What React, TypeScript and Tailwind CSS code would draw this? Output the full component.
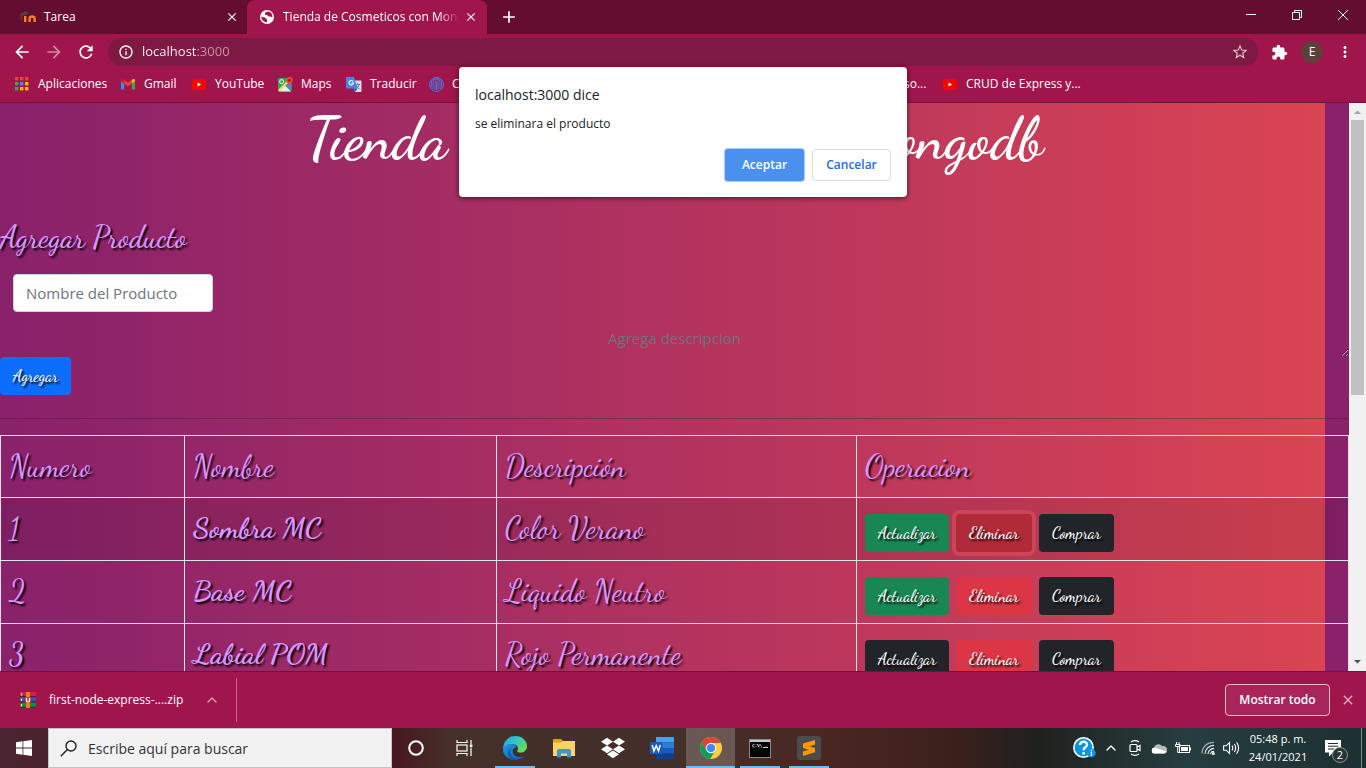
import React from "react";
import {
  MdArrowBack,
  MdArrowForward,
  MdRefresh,
  MdInfoOutline,
  MdStarBorder,
  MdExtension,
  MdMoreVert,
  MdClose,
  MdAdd,
} from "react-icons/md";
import { FaDropbox } from "react-icons/fa";
import { ChevronUp } from "lucide-react";

function MoodleIcon() {
  return (
    <svg width="16" height="16" viewBox="0 0 16 16" aria-hidden="true">
      <path d="M5.2 13V7M9.6 13V9.4C9.6 6.8 14.6 6.8 14.6 9.4V13" fill="none" stroke="#f58220" strokeWidth="2.4" />
      <path d="M0 5 4.5 2.6 9 3 7.4 5.6 3 6.8Z" fill="#4a4340" />
      <path d="M1.2 5.5V10.5" stroke="#6d4a3e" strokeWidth="1" />
    </svg>
  );
}

function GlobeIcon() {
  return (
    <svg width="14" height="14" viewBox="0 0 14 14" aria-hidden="true">
      <circle cx="7" cy="7" r="7" fill="#fff" />
      <path d="M1.4 6.6C3 7.6 5 7 5.6 8.2 6.4 9.6 7.4 9 7.2 10.4 7 11.4 6.8 12 7 12.4 3.8 12.4 1.2 10 1.4 6.6ZM7.6 1.6C6 2 4.6 3 5 4.4 5.6 5.6 7.2 4.6 8 5.8 8.8 7 10.4 6.4 12.4 7.4 12.8 4.4 10.8 1.6 7.6 1.6Z" fill="#a1154d" />
    </svg>
  );
}

function AppsIcon() {
  const colors = ["#ea4335", "#ea4335", "#ea4335", "#34a853", "#4285f4", "#fbbc05", "#34a853", "#fbbc05", "#fbbc05"];
  return (
    <svg width="14" height="14" viewBox="0 0 14 14" aria-hidden="true">
      {colors.map((c, i) => (
        <rect key={i} x={(i % 3) * 5} y={Math.floor(i / 3) * 5} width="3.4" height="3.4" fill={c} />
      ))}
    </svg>
  );
}

function GmailIcon() {
  return (
    <svg width="14" height="14" viewBox="0 0 14 14" aria-hidden="true">
      <path d="M0 4 3.2 6.4V12.5H1C.4 12.5 0 12 0 11.5Z" fill="#4285f4" />
      <path d="M14 4 10.8 6.4V12.5H13C13.6 12.5 14 12 14 11.5Z" fill="#34a853" />
      <path d="M3.2 2.8 7 5.7 10.8 2.8V6.6L7 9.5 3.2 6.6Z" fill="#ea4335" />
      <path d="M0 3.4C0 1.8 1.6 1.4 3.2 2.8V6.6L0 4.2Z" fill="#c5221f" />
      <path d="M14 3.4C14 1.8 12.4 1.4 10.8 2.8V6.6L14 4.2Z" fill="#fbbc04" />
    </svg>
  );
}

function YouTubeIcon() {
  return (
    <svg width="14" height="14" viewBox="0 0 14 14" aria-hidden="true">
      <rect x="0" y="2" width="14" height="11" rx="2.6" fill="#f00" />
      <path d="M5.5 5.4 9.3 7.5 5.5 9.6Z" fill="#fff" />
    </svg>
  );
}

function MapsIcon() {
  return (
    <svg width="15" height="15" viewBox="0 0 15 15" aria-hidden="true">
      <rect x="0" y="1" width="13.5" height="13.5" rx="1" fill="#34a853" />
      <path d="M1 14.5 7 8.5 13 14.5Z" fill="#e8eaed" />
      <path d="M8 7.5 11 5 13.5 8V13.5Z" fill="#4285f4" />
      <path d="M0 13 12 1 14 2 1.5 14.5Z" fill="#fdd663" />
      <circle cx="3.6" cy="4.6" r="2" fill="none" stroke="#fff" strokeWidth="1" />
      <path d="M11.5 0A3.3 3.3 0 0 1 14.8 3.3C14.8 5.3 12 6.4 11.5 9.5 11 6.4 8.2 5.3 8.2 3.3A3.3 3.3 0 0 1 11.5 0Z" fill="#ea4335" />
      <circle cx="11.5" cy="3.3" r="1.2" fill="#8c1a11" />
    </svg>
  );
}

function TranslateIcon() {
  return (
    <svg width="16" height="15" viewBox="0 0 16 15" aria-hidden="true">
      <path d="M6 3.5H14.5C15 3.5 15.5 4 15.5 4.5V14C15.5 14.5 15 15 14.5 15H9Z" fill="#dadce0" />
      <path d="M9 7.4H14M11.5 6.4V7.4M13 7.6C12.5 9.6 11 11 9.6 11.8M10 8.2C10.6 9.8 12 11 13.6 11.8" fill="none" stroke="#607d8b" strokeWidth="1" />
      <path d="M1 0H8L11.5 11.6H1C.4 11.6 0 11.2 0 10.6V1C0 .4.4 0 1 0Z" fill="#4285f4" />
      <path d="M7.2 4.5A2.2 2.2 0 1 0 7.5 6H5.4" fill="none" stroke="#fff" strokeWidth="1.1" />
      <path d="M8 11.6H11.5L9 15Z" fill="#1a57c4" />
    </svg>
  );
}

function RingIcon() {
  return (
    <svg width="15" height="15" viewBox="0 0 15 15" aria-hidden="true" fill="none" stroke="#4479e8" strokeWidth="1">
      <circle cx="7.5" cy="7.5" r="6.9" />
      <path d="M4 12V5.5A3.5 3.5 0 0 1 11 5.5V12M6 12.5V5.5A1.5 1.5 0 0 1 9 5.5V12.5M7.5 5V13M2.3 10.5V6A5.2 5.2 0 0 1 12.7 6V10.5" />
    </svg>
  );
}

function RarIcon() {
  return (
    <svg width="16" height="16" viewBox="0 0 16 16" aria-hidden="true">
      <rect x="0" y="0" width="16" height="5" fill="#d81b4c" />
      <rect x="0" y="5.4" width="16" height="5" fill="#3f51b5" />
      <rect x="0" y="10.8" width="16" height="5" fill="#158a3c" />
      <path d="M0 4.5H16M0 9.9H16M0 15.4H16" stroke="#38203a" strokeWidth=".9" />
      <path d="M1.5 1V3.5M1.5 6.5V9M1.5 12V14.5" stroke="#ffe57a" strokeWidth="1.2" />
      <rect x="6" y="0" width="4" height="16" fill="#ef7d1a" />
      <rect x="5" y="5" width="6" height="6" fill="#c8441c" />
      <path d="M6.5 6V8.4A1.5 1.5 0 0 0 9.5 8.4V6" fill="none" stroke="#fff" strokeWidth="1.2" />
    </svg>
  );
}

function WindowsIcon() {
  return (
    <svg width="16" height="16" viewBox="0 0 16 16" fill="#fff" aria-hidden="true">
      <path d="M0 2.2 6.5 1.3V7.6H0ZM7.3 1.2 16 0V7.6H7.3ZM0 8.4H6.5V14.7L0 13.8ZM7.3 8.4H16V16L7.3 14.8Z" />
    </svg>
  );
}

function SearchIcon() {
  return (
    <svg width="17" height="17" viewBox="0 0 17 17" fill="none" stroke="#222" strokeWidth="1.4" aria-hidden="true">
      <circle cx="11" cy="6" r="5" />
      <path d="M7.4 9.6.8 16.2" />
    </svg>
  );
}

function TaskViewIcon() {
  return (
    <svg width="17" height="16" viewBox="0 0 17 16" fill="none" stroke="#fff" strokeWidth="1.2" aria-hidden="true">
      <path d="M1 0V2.5H11V0M1 16V13.5H11V16M15 0V4M15 7.5V16" />
      <rect x="1" y="5" width="10" height="6" />
      <path d="M13.8 5.7H16.4" strokeWidth="2.6" />
    </svg>
  );
}

function EdgeIcon() {
  return (
    <svg width="24" height="24" viewBox="0 0 24 24" aria-hidden="true">
      <defs>
        <linearGradient id="edgeTop" x1="0" y1="0" x2="1" y2=".5">
          <stop offset="0" stopColor="#2aa7e8" />
          <stop offset=".6" stopColor="#35c8c4" />
          <stop offset="1" stopColor="#62dc5a" />
        </linearGradient>
        <linearGradient id="edgeLow" x1="0" y1="0" x2="1" y2="1">
          <stop offset="0" stopColor="#1b9de2" />
          <stop offset="1" stopColor="#0f58b0" />
        </linearGradient>
      </defs>
      <path d="M.2 11C1 4.5 6 0 12.2 0 19.5 0 24 5 24 10.2 24 14 21 16.6 17.4 16.6 15 16.6 13.6 15.8 14.4 14.6 16 12.4 14.6 8.2 9.6 8.2 4 8.2.4 11.5.2 14Z" fill="url(#edgeTop)" />
      <path d="M0 12.5C.8 9.4 4.4 7.6 8.4 8 12 8.4 13.6 10.4 13 11.2 8.6 12.4 8.4 19.4 15 20.6 18.6 21.2 21 19.6 22.4 18.6 20.4 22 16.6 24 12 24 5 24-.6 18.6 0 12.5Z" fill="url(#edgeLow)" />
      <path d="M8.2 11.6C6 15 7 22 14 23.8 8.6 24.8 5 21 5 17.2 5 14.6 6.4 12.6 8.2 11.6Z" fill="#0c4f9e" opacity=".7" />
      <path d="M10.3 12.8C9 14.8 9.8 19 15 20.4 18.6 21.3 21.2 19.6 22.5 18.4 18 20 13 18.4 12.2 14.6Z" fill="#3b2c28" />
    </svg>
  );
}

function ExplorerIcon() {
  return (
    <svg width="22" height="19" viewBox="0 0 22 19" aria-hidden="true">
      <path d="M0 1C0 .4.4 0 1 0H8L10 2H21C21.6 2 22 2.4 22 3V17H0Z" fill="#e0a010" />
      <path d="M0 3.5H8L10 2H22V17H0Z" fill="#fcd462" />
      <path d="M4 18.5V12C4 10.8 4.8 10 6 10H16C17.2 10 18 10.8 18 12V18.5H14V14.5H8V18.5Z" fill="#3b94d9" />
    </svg>
  );
}

function WordIcon() {
  return (
    <svg width="24" height="22" viewBox="0 0 24 22" aria-hidden="true">
      <rect x="6" y="0" width="18" height="5.5" fill="#41a5ee" />
      <rect x="6" y="5.5" width="18" height="5.5" fill="#2b7cd3" />
      <rect x="6" y="11" width="18" height="5.5" fill="#185abd" />
      <rect x="6" y="16.5" width="18" height="5.5" fill="#103f91" />
      <rect x="0" y="5" width="12.5" height="12" rx="1" fill="#185abd" />
      <path d="M2.2 8 3.9 14 6.2 8.6 8.5 14 10.2 8" fill="none" stroke="#fff" strokeWidth="1.5" />
    </svg>
  );
}

function ChromeIcon() {
  return (
    <svg width="22" height="22" viewBox="0 0 22 22" aria-hidden="true">
      <circle cx="11" cy="11" r="11" fill="#ffcd40" />
      <path d="M11 0C6.8 0 3.3 2.3 1.5 5.5L6.6 13.6 11 6H20.8C19 2.4 15.4 0 11 0Z" fill="#db4437" />
      <path d="M1.5 5.5A11 11 0 0 0 10.2 22L15.3 13.4 6.7 13.5Z" fill="#0f9d58" />
      <circle cx="11" cy="11" r="5.2" fill="#f1f1f1" />
      <circle cx="11" cy="11" r="4.1" fill="#4285f4" />
    </svg>
  );
}

function TerminalIcon() {
  return (
    <svg width="22" height="19" viewBox="0 0 22 19" aria-hidden="true">
      <rect x=".5" y=".5" width="21" height="18" fill="#050505" stroke="#8a8a8a" />
      <rect x="1" y="1" width="20" height="2" fill="#c9c9c9" />
      <path d="M5.4 5.4C3 4.6 3 8.8 5.4 8M7 5.6V6.2M7 7.4V8M8.4 5 10 8.4M11 5V7M12 8H13M14 8.4H19" fill="none" stroke="#e4e4e4" strokeWidth="1" />
    </svg>
  );
}

function SublimeIcon() {
  return (
    <svg width="24" height="24" viewBox="0 0 24 24" aria-hidden="true">
      <rect width="24" height="24" rx="2" fill="#4b4b4b" />
      <path d="M6 7.6 18 4V8.6L12.5 10.3 18 12V16.2L6 20V15.6L11.6 13.8 6 12Z" fill="#ff9800" />
    </svg>
  );
}

function HelpIcon() {
  return (
    <svg width="23" height="22" viewBox="0 0 23 22" aria-hidden="true">
      <circle cx="10.5" cy="10.5" r="9.7" fill="#0a96dc" stroke="#fff" strokeWidth="1.6" />
      <path d="M7 8C7 3.6 14.4 3.8 14 8 13.8 10.4 10.6 10.2 10.6 13.2M10.6 15V17.4" fill="none" stroke="#fff" strokeWidth="2.4" />
      <circle cx="18.4" cy="16" r="4.4" fill="#0a96dc" />
      <path d="M18.4 12.8V14.2M18.4 15V19" stroke="#fff" strokeWidth="1.3" />
    </svg>
  );
}

function MeetIcon() {
  return (
    <svg width="12" height="18" viewBox="0 0 12 18" fill="none" stroke="#fff" strokeWidth="1.2" aria-hidden="true">
      <path d="M2 3Q6 .4 10 3M2 15Q6 17.6 10 15" />
      <rect x="1" y="5.5" width="7" height="7" rx="1" />
      <path d="M8 8 11 6.5V11.5L8 10" />
    </svg>
  );
}

function CloudIcon() {
  return (
    <svg width="16" height="11" viewBox="0 0 16 11" aria-hidden="true">
      <path d="M3.6 10.5A3.2 3.2 0 0 1 3 4.4 4.6 4.6 0 0 1 11.2 3.2 3.6 3.6 0 0 1 16 7 3.2 3.2 0 0 1 13 10.5Z" fill="#b9b9b9" />
      <path d="M3 10.5A3 3 0 0 1 3.4 4.6L15.6 8.4A3 3 0 0 1 13 10.5Z" fill="#fff" />
    </svg>
  );
}

function BatteryIcon() {
  return (
    <svg width="16" height="12" viewBox="0 0 16 12" fill="none" stroke="#fff" strokeWidth="1" aria-hidden="true">
      <rect x="4.5" y="3.5" width="10" height="7" />
      <path d="M15.5 5.5V8.5M1.5 0V2M4 0V2M.5 2.5H5V4.5H.5ZM2.7 5V10.5H4.5" />
      <rect x="6.5" y="5.5" width="6" height="3" fill="#fff" />
    </svg>
  );
}

function WifiIcon() {
  return (
    <svg width="14" height="14" viewBox="0 0 14 14" fill="none" stroke="#fff" strokeWidth="1.1" aria-hidden="true">
      <path d="M1 12.6C1 6 6 1.4 13 1.4" opacity=".6" />
      <path d="M4 12.8C4 8 8 4.4 13 4.4M7 13C7 10 9.6 7.4 13 7.4M9.8 13.2C9.8 11.4 11.2 10.4 13 10.4" />
      <circle cx="12.4" cy="12.6" r=".9" fill="#fff" />
    </svg>
  );
}

function VolumeIcon() {
  return (
    <svg width="17" height="14" viewBox="0 0 17 14" fill="none" stroke="#fff" strokeWidth="1.1" aria-hidden="true">
      <path d="M.6 4.8H3.2L6.5 1.6V12.4L3.2 9.2H.6ZM9 4.6Q10.6 7 9 9.4M11.4 3Q14 7 11.4 11M13.6 1.2Q17.6 7 13.6 12.8" />
    </svg>
  );
}

function NotificationIcon() {
  return (
    <svg width="17" height="17" viewBox="0 0 17 17" aria-hidden="true">
      <path d="M0 0H16V12.4H8L4 16.4V12.4H0Z" fill="#fff" />
      <path d="M3 3.5H13M3 6.2H13M3 9H9" stroke="#1e2f31" strokeWidth="1" />
    </svg>
  );
}

const bookmarks = [
  { label: "Aplicaciones", icon: <AppsIcon />, box: "w-[106px]" },
  { label: "Gmail", icon: <GmailIcon />, box: "w-[71px]" },
  { label: "YouTube", icon: <YouTubeIcon />, box: "w-[86px]" },
  { label: "Maps", icon: <MapsIcon />, box: "w-[69px]" },
  { label: "Traducir", icon: <TranslateIcon />, box: "w-[82px]" },
  { label: "C", icon: <RingIcon />, box: "w-[476px]" },
];

function BrowserTabs() {
  return (
    <div className="flex h-[34px] bg-[#640d30] text-[12px] text-white">
      <div className="flex w-[247px] items-center pr-[7px] pl-[20px]">
        <MoodleIcon />
        <span className="ml-2 flex-1">Tarea</span>
        <button aria-label="Cerrar pestaña Tarea" className="grid size-4 place-items-center"><MdClose size={14} /></button>
      </div>
      <div className="flex w-[240px] items-center rounded-t-lg bg-[#a1154d] pr-2 pl-[13px]">
        <GlobeIcon />
        <span className="ml-[9px] flex-1 overflow-hidden [mask-image:linear-gradient(90deg,#000_88%,transparent)] whitespace-nowrap">
          Tienda de Cosmeticos con Mongodb
        </span>
        <button aria-label="Cerrar pestaña Tienda" className="ml-1 grid size-4 place-items-center"><MdClose size={14} /></button>
      </div>
      <button aria-label="Nueva pestaña" className="ml-3 grid w-5 place-items-center"><MdAdd size={20} /></button>
      <div className="ml-auto flex h-[29px]">
        <button aria-label="Minimizar" className="grid w-[46px] place-items-center">
          <svg width="10" height="10" viewBox="0 0 10 10" stroke="#fff"><path d="M0 4.5H10" /></svg>
        </button>
        <button aria-label="Restaurar" className="grid w-[46px] place-items-center">
          <svg width="10" height="10" viewBox="0 0 10 10" fill="none" stroke="#fff"><path d="M.5 2.5H7.5V9.5H.5ZM2.5 2.5V.5H9.5V7.5H7.5" /></svg>
        </button>
        <button aria-label="Cerrar" className="grid w-[46px] place-items-center">
          <svg width="10" height="10" viewBox="0 0 10 10" stroke="#fff"><path d="M0 0 10 10M10 0 0 10" /></svg>
        </button>
      </div>
    </div>
  );
}

function Toolbar() {
  return (
    <div className="flex h-[36px] items-center bg-[#a1154d] pr-3 pl-3 text-white">
      <button aria-label="Atrás" className="w-8"><MdArrowBack size={20} /></button>
      <button aria-label="Adelante" className="w-8 text-[#d08aa6]"><MdArrowForward size={20} /></button>
      <button aria-label="Recargar" className="w-8"><MdRefresh size={20} /></button>
      <div className="flex h-7 flex-1 items-center rounded-full bg-[#7d1943] pr-[9px] pl-[10px]">
        <MdInfoOutline size={16} />
        <input
          aria-label="Dirección"
          defaultValue="localhost:3000"
          className="ml-2 min-w-0 flex-1 bg-[linear-gradient(90deg,#fff_55px,#c995ac_55px)] bg-clip-text text-[13px] text-transparent outline-none"
        />
        <MdStarBorder size={18} className="text-[#d8c0ca]" />
      </div>
      <button aria-label="Extensiones" className="ml-[13px]"><MdExtension size={17} /></button>
      <button aria-label="Perfil" className="ml-[13px] grid size-[22px] place-items-center rounded-full bg-[#5d4037] text-[12px]">E</button>
      <button aria-label="Menú" className="ml-[13px]"><MdMoreVert size={18} /></button>
    </div>
  );
}

function BookmarkBar() {
  return (
    <nav aria-label="Marcadores" className="flex h-[33px] items-center border-b border-[#741039] bg-[#a1154d] pb-1 pl-[14px] text-[12px] text-white">
      {bookmarks.map((b) => (
        <a key={b.label} href="#" className={"flex shrink-0 items-center gap-2 " + b.box}>
          <span className="grid w-4 place-items-center">{b.icon}</span>
          {b.label}
        </a>
      ))}
      <a href="#" className="w-[38px] shrink-0">so...</a>
      <a href="#" className="flex shrink-0 items-center gap-2">
        <span className="grid w-4 place-items-center"><YouTubeIcon /></span>
        CRUD de Express y...
      </a>
    </nav>
  );
}

const script = "font-['Dancing_Script','Liberation_Serif',cursive]";
const products = [
  { id: 1, name: "Sombra MC", text: "Color Verano", update: "bg-[#198754]", remove: "bg-[#b02a37] ring-4 ring-[#cb4459]", row: "bg-black/[0.08]" },
  { id: 2, name: "Base MC", text: "Liquido Neutro", update: "bg-[#198754]", remove: "bg-[#dc3545]", row: "" },
  { id: 3, name: "Labial POM", text: "Rojo Permanente", update: "bg-[#212529]", remove: "bg-[#dc3545]", row: "" },
];

function ShopButton({ color, children }: { color: string; children: React.ReactNode }) {
  return (
    <button className={"h-[38px] rounded px-[13px] text-[16px] leading-6 font-medium text-white [text-shadow:2px_2px_2px_#000] " + script + " " + color}>
      {children}
    </button>
  );
}

function ShopPage() {
  const lilac = "text-[30px] text-[#d896ff] [text-shadow:2px_2px_2px_#000] " + script;
  return (
    <div className="flex min-h-0 flex-1">
      <main className="min-w-0 flex-1 overflow-hidden bg-[linear-gradient(90deg,#89216b,#da4453)] bg-[length:calc(100%-24px)_100%]">
        <h1 className={"text-center text-[59px] leading-[73px] font-semibold text-white " + script}>Tienda de Cosmeticos con Mongodb</h1>
        <h2 className={"mt-[42px] leading-[38px] font-medium " + lilac}>Agregar Producto</h2>
        <form onSubmit={(e) => e.preventDefault()}>
          <input
            aria-label="Nombre del Producto"
            placeholder="Nombre del Producto"
            className="mt-[18px] ml-[13px] block h-[38px] w-[200px] rounded border border-[#ced4da] bg-white px-3 text-[15px] text-[#212529] placeholder:text-[#6c757d]"
          />
          <textarea
            aria-label="Agrega descripcion"
            placeholder="Agrega descripcion"
            className="block h-[45px] w-full resize bg-transparent pt-[14px] text-center text-[15px] leading-6 text-white placeholder:text-[#6c757d]"
          />
          <ShopButton color="bg-[#0d6efd]">Agregar</ShopButton>
        </form>
        <hr className="mt-[23px] mb-4 border-[#212529]/35" />
        <table className={"w-full table-fixed border-collapse text-left leading-[46px] " + lilac}>
          <thead>
            <tr className="h-[62px]">
              <th className="w-[184px] border border-[#dee2e6] px-2 pb-[2px] font-normal">Numero</th>
              <th className="w-[312px] border border-[#dee2e6] px-2 pb-[2px] font-normal">Nombre</th>
              <th className="w-[360px] border border-[#dee2e6] px-2 pb-[2px] font-normal">Descripción</th>
              <th className="border border-[#dee2e6] px-2 pb-[2px] font-normal">Operacion</th>
            </tr>
          </thead>
          <tbody>
            {products.map((p) => (
              <tr key={p.id} className={"h-[63px] " + p.row}>
                <td className="border border-[#dee2e6] px-2 pb-[2px]">{p.id}</td>
                <td className="border border-[#dee2e6] px-2 pb-[2px] text-[29px] font-bold">{p.name}</td>
                <td className="border border-[#dee2e6] px-2 pb-[2px]">{p.text}</td>
                <td className="border border-[#dee2e6] px-2 pt-4 pb-2">
                  <div className="flex gap-[7px]">
                    <ShopButton color={p.update}>Actualizar</ShopButton>
                    <ShopButton color={p.remove}>Eliminar</ShopButton>
                    <ShopButton color="bg-[#212529]">Comprar</ShopButton>
                  </div>
                </td>
              </tr>
            ))}
          </tbody>
        </table>
      </main>
      <div className="flex w-[17px] flex-col items-center justify-between bg-[#f1f1f1]">
        <svg width="17" height="17" viewBox="0 0 17 17"><path d="M5 11 8.5 7.5 12 11Z" fill="#a3a3a3" /></svg>
        <div className="mb-auto h-[275px] w-[13px] bg-[#c1c1c1]" />
        <svg width="17" height="17" viewBox="0 0 17 17"><path d="M5 6 8.5 9.5 12 6Z" fill="#505050" /></svg>
      </div>
    </div>
  );
}

function DownloadBar() {
  return (
    <div className="flex h-[57px] shrink-0 items-center border-t border-[#741039] bg-[#a1154d] text-white">
      <div className="flex h-11 w-[237px] items-center border-r border-[#c0638a] pl-5 text-[12px]">
        <RarIcon />
        <span className="ml-[13px] w-[155px]">first-node-express-....zip</span>
        <button aria-label="Opciones de descarga"><ChevronUp size={16} className="text-[#d5a0b6]" /></button>
      </div>
      <button className="ml-auto h-8 w-[105px] rounded border border-[#e3bccb] bg-[#a8255a] text-[12px] font-semibold">Mostrar todo</button>
      <button aria-label="Cerrar barra de descargas" className="mx-[10px]"><MdClose size={16} className="text-[#dcb0c2]" /></button>
    </div>
  );
}

function TaskButton({ label, state, children }: { label: string; state?: string; children: React.ReactNode }) {
  return (
    <button aria-label={label} className={"grid h-10 w-[49px] place-items-center px-1 " + (state ?? "")}>
      {children}
    </button>
  );
}

const running = "bg-[linear-gradient(#76b9ed,#76b9ed)] bg-[length:40px_2px] bg-[position:center_bottom] bg-no-repeat";

function Taskbar() {
  return (
    <div className="flex h-10 shrink-0 items-center bg-[linear-gradient(90deg,#4a2430_0%,#48181f_29%,#45302a_33%,#43302a_50%,#4a2622_61%,#3a201c_70%,#1f211e_76%,#263e41_87%,#1c2f31_100%)] text-white">
      <button aria-label="Inicio" className="grid w-12 place-items-center"><WindowsIcon /></button>
      <label className="flex h-10 w-[344px] items-center border border-[#c5c5c5] bg-[#f2f2f2] pl-[11px]">
        <SearchIcon />
        <input placeholder="Escribe aquí para buscar" aria-label="Escribe aquí para buscar" className="ml-[11px] min-w-0 flex-1 text-[14px] text-black outline-none placeholder:text-[#333]" />
      </label>
      <button aria-label="Cortana" className="grid w-12 place-items-center">
        <svg width="16" height="16" viewBox="0 0 16 16"><circle cx="8" cy="8" r="6.8" fill="none" stroke="#fff" strokeWidth="2" /></svg>
      </button>
      <button aria-label="Vista de tareas" className="mr-[2px] grid w-12 place-items-center"><TaskViewIcon /></button>
      <TaskButton label="Edge" state={running}><EdgeIcon /></TaskButton>
      <TaskButton label="Explorador"><ExplorerIcon /></TaskButton>
      <TaskButton label="Dropbox"><FaDropbox size={24} /></TaskButton>
      <TaskButton label="Word"><WordIcon /></TaskButton>
      <TaskButton label="Chrome" state="bg-white/20 shadow-[inset_0_-2px_#76b9ed]"><ChromeIcon /></TaskButton>
      <TaskButton label="Símbolo del sistema" state={running}><TerminalIcon /></TaskButton>
      <TaskButton label="Sublime Text" state={running}><SublimeIcon /></TaskButton>
      <div className="ml-auto flex items-center">
        <HelpIcon />
        <ChevronUp size={16} className="ml-[7px]" />
        <span className="ml-[10px]"><MeetIcon /></span>
        <span className="ml-[10px]"><CloudIcon /></span>
        <span className="ml-2"><BatteryIcon /></span>
        <span className="ml-[10px]"><WifiIcon /></span>
        <span className="ml-2"><VolumeIcon /></span>
        <div className="w-[76px] text-center text-[11px] leading-[18px] whitespace-nowrap">
          <div>05:48 p. m.</div>
          <div>24/01/2021</div>
        </div>
        <button aria-label="Notificaciones" className="relative ml-[9px] w-[36px]">
          <NotificationIcon />
          <span className="absolute top-[7px] left-[7px] grid size-4 place-items-center rounded-full border border-[#8a8f90] bg-[#2b3435] text-[11px] leading-none">2</span>
        </button>
        <div className="mr-1 h-10 w-px bg-[#7c8788]" />
      </div>
    </div>
  );
}

function ConfirmDialog() {
  return (
    <div role="dialog" aria-labelledby="dlg-title" className="absolute top-[67px] left-1/2 w-[448px] -translate-x-1/2 rounded-sm bg-white p-4 text-[#202124] shadow-[0_1px_4px_1px_rgba(0,0,0,0.45)]">
      <h2 id="dlg-title" className="text-[14px] leading-6">localhost:3000 dice</h2>
      <p className="mt-[7px] text-[12px] leading-5">se eliminara el producto</p>
      <div className="mt-[15px] flex justify-end gap-2">
        <button className="h-8 w-[79px] rounded-[3px] bg-[#4a90ee] text-[12px] font-semibold text-white ring-1 ring-[#a9cbf6]">Aceptar</button>
        <button className="h-8 w-[79px] rounded border border-[#dadce0] text-[12px] font-semibold text-[#1a6fe0]">Cancelar</button>
      </div>
    </div>
  );
}

export default function App() {
  return (
    <div className="relative flex h-screen flex-col overflow-hidden font-['Open_Sans','Noto_Sans',sans-serif]">
      <BrowserTabs />
      <Toolbar />
      <BookmarkBar />
      <ShopPage />
      <DownloadBar />
      <Taskbar />
      <ConfirmDialog />
    </div>
  );
}
